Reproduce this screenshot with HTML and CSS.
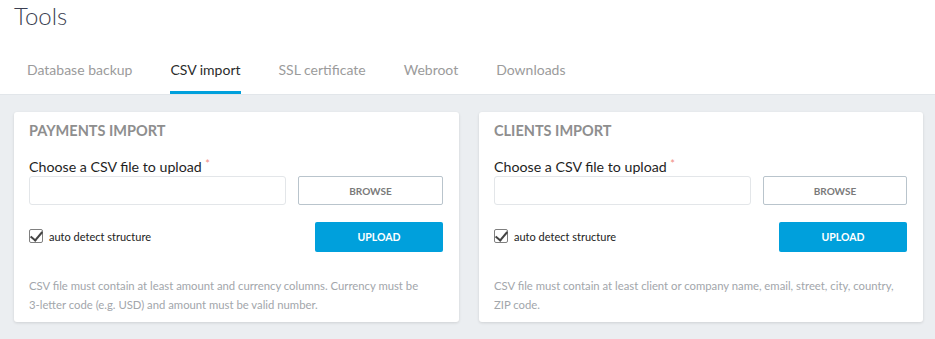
FILE: index.html
```html
<!DOCTYPE html>
<html lang="en">
<head>
<meta charset="UTF-8" />
<meta name="viewport" content="width=device-width, initial-scale=1.0">
<title>Tools</title>
<link rel="stylesheet" href="styles.css">
</head>
<body>
<div class="header">
    <h1 class="page-title">Tools</h1>
    <ul class="tabs">
        <li><a href="#">Database backup</a></li>
        <li class="active"><a href="#">CSV import</a></li>
        <li><a href="#">SSL certificate</a></li>
        <li><a href="#">Webroot</a></li>
        <li><a href="#">Downloads</a></li>
    </ul>
</div>

<div class="content">
    <!-- Payments -->
    <div class="card">
        <h2 class="card-title">PAYMENTS IMPORT</h2>
        <label class="field-label">Choose a CSV file to upload <span class="req">*</span></label>
        <div class="file-row">
            <input type="text" class="file-input">
            <button type="button" class="btn-browse">BROWSE</button>
        </div>
        <div class="action-row">
            <label class="check">
                <input type="checkbox" checked>
                <span>auto detect structure</span>
            </label>
            <button type="button" class="btn-upload">UPLOAD</button>
        </div>
        <p class="help">CSV file must contain at least amount and currency columns. Currency must be 3-letter code (e.g. USD) and amount must be valid number.</p>
    </div>

    <!-- Clients -->
    <div class="card">
        <h2 class="card-title">CLIENTS IMPORT</h2>
        <label class="field-label">Choose a CSV file to upload <span class="req">*</span></label>
        <div class="file-row">
            <input type="text" class="file-input">
            <button type="button" class="btn-browse">BROWSE</button>
        </div>
        <div class="action-row">
            <label class="check">
                <input type="checkbox" checked>
                <span>auto detect structure</span>
            </label>
            <button type="button" class="btn-upload">UPLOAD</button>
        </div>
        <p class="help">CSV file must contain at least client or company name, email, street, city, country, ZIP code.</p>
    </div>
</div>
</body>
</html>
```

FILE: styles.css
```css
body {
    margin: 0;
    font-family: Lato, 'Open Sans', sans-serif;
    background: #ebeef1;
    height: 100vh;
}
.header {
    background: #fff;
    border-bottom: 1px solid #e2e6ea;
    padding: 0 0 0 14px;
}
.page-title {
    margin: 0;
    padding-top: 1px;
    font-size: 24px;
    font-weight: 300;
    line-height: 30px;
    color: #3b3f52;
}
.tabs {
    list-style: none;
    margin: 0;
    padding: 0 0 0 13px;
    display: flex;
    gap: 38px;
    margin-top: 29px;
}
.tabs li a {
    display: block;
    font-size: 14px;
    line-height: 20px;
    color: #9b9b9b;
    text-decoration: none;
    padding-bottom: 11px;
    border-bottom: 3px solid transparent;
}
.tabs li.active a {
    color: #2b2b2b;
    border-bottom-color: #00a0dc;
}
.content {
    display: grid;
    grid-template-columns: 445px 444px;
    gap: 20px;
    padding: 17px 12px 0 14px;
}
.card {
    background: #fff;
    border-radius: 3px;
    box-shadow: 0 1px 3px rgba(0,0,0,0.12);
    padding: 10px 16px 8px 15px;
}
.card-title {
    margin: 0;
    font-size: 14.5px;
    font-weight: 700;
    line-height: 18px;
    color: #8e8e8e;
}
.field-label {
    display: block;
    margin-top: 18px;
    font-size: 14.2px;
    line-height: 18px;
    color: #1e1e1e;
}
.req {
    color: #f28b82;
    font-size: 11px;
    vertical-align: top;
    position: relative;
    top: -3px;
}
.file-row {
    display: flex;
    gap: 12px;
}
.file-input {
    width: 257px;
    height: 29px;
    box-sizing: border-box;
    border: 1px solid #e3e6e9;
    border-radius: 3px;
    outline: none;
    font-family: inherit;
}
.btn-browse {
    flex: 1;
    height: 29px;
    background: #fff;
    border: 1px solid #b9c4cc;
    border-radius: 2px;
    font-family: inherit;
    font-size: 10px;
    font-weight: 700;
    color: #7a7a7a;
    cursor: pointer;
}
.action-row {
    display: flex;
    justify-content: space-between;
    align-items: flex-start;
    margin-top: 17px;
}
.check {
    display: flex;
    align-items: center;
    gap: 6px;
    margin-top: 7px;
    font-size: 11px;
    color: #222;
}
.check input {
    margin: 0;
    width: 14px;
    height: 14px;
    appearance: none;
    border: 1px solid #7f7f7f;
    border-radius: 2px;
    background: #fff;
    position: relative;
}
.check input:checked::after {
    content: '';
    position: absolute;
    left: 3px;
    top: -1px;
    width: 5px;
    height: 10px;
    border: solid #444;
    border-width: 0 2px 2px 0;
    transform: rotate(40deg);
}
.btn-upload {
    width: 128px;
    height: 30px;
    background: #00a0dc;
    border: none;
    border-radius: 2px;
    color: #fff;
    font-family: inherit;
    font-size: 10.5px;
    font-weight: 700;
    cursor: pointer;
}
.help {
    margin: 24px 0 0;
    max-width: 400px;
    font-size: 11.3px;
    line-height: 19px;
    color: #a2a6ab;
}
```
